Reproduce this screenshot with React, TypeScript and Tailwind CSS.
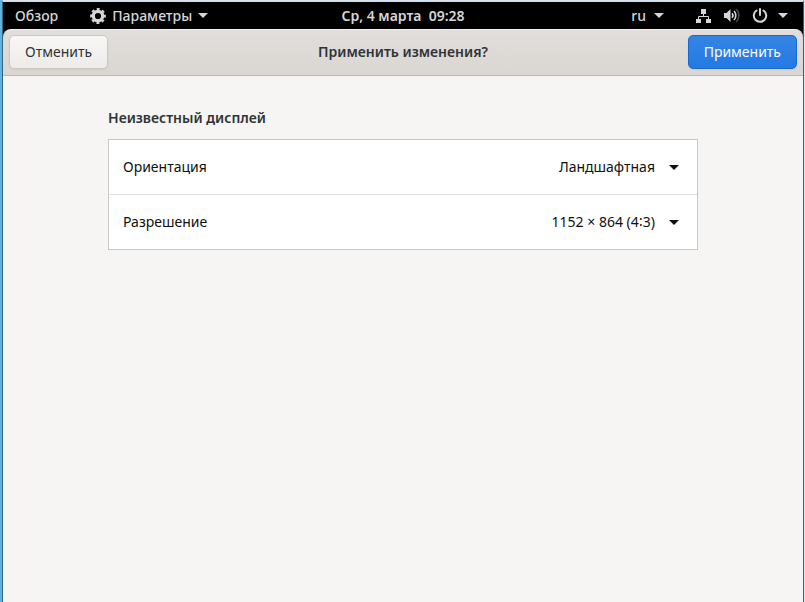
import { useState } from "react";

const ORIENTATIONS = ["Ландшафтная", "Портретная"];
const RESOLUTIONS = ["1152 × 864 (4∶3)", "1024 × 768 (4∶3)", "800 × 600 (4∶3)"];

type CaretProps = { className?: string };

function Caret({ className = "" }: CaretProps) {
    return (
        <svg viewBox="0 0 10 5" className={`h-[5px] w-[10px] shrink-0 fill-current ${className}`} aria-hidden="true">
            <path d="M0 0h10L5 5z" />
        </svg>
    );
}

function GearIcon() {
    return (
        <svg viewBox="0 0 16 16" className="size-4 shrink-0" fill="none" stroke="currentColor" aria-hidden="true">
            <circle cx="8" cy="8" r="4.700" strokeWidth="3.200" />
            <circle cx="8" cy="8" r="6.900" strokeWidth="2" strokeDasharray="3 2.419" strokeDashoffset="1.500" />
        </svg>
    );
}

function NetworkIcon() {
    return (
        <svg viewBox="0 0 16 16" className="size-4 shrink-0" aria-hidden="true">
            <path fill="currentColor" d="M5 1h5v5H5zM0 11h5v4H0zM10 11h5v4h-5z" />
            <path fill="none" stroke="currentColor" d="M7.500 6v2.500M2.500 11V8.500h10V11" />
        </svg>
    );
}

function VolumeIcon() {
    return (
        <svg viewBox="0 0 16 16" className="size-4 shrink-0" fill="none" stroke="currentColor" strokeWidth="1.6" aria-hidden="true">
            <path fill="currentColor" stroke="none" d="M0 5h2.500L6.500 1v13l-4-4H0z" />
            <path d="M8 5.300a3.200 3.200 0 0 1 0 4.400" />
            <path d="M10 3a6.500 6.500 0 0 1 0 9" />
            <path d="M12.300 1a9.500 9.500 0 0 1 0 13" opacity="0.35" />
        </svg>
    );
}

function PowerIcon() {
    return (
        <svg viewBox="0 0 16 16" className="size-4 shrink-0" fill="none" stroke="currentColor" strokeWidth="2" aria-hidden="true">
            <path d="M4.500 2.500a6.200 6.200 0 1 0 7 0" strokeLinecap="round" />
            <path d="M8 1v6" strokeLinecap="round" />
        </svg>
    );
}

function TopBar() {
    return (
        <nav className="grid h-[27px] grid-cols-[1fr_auto_1fr] items-center bg-black px-3 font-medium text-[#d6d6d6]">
            <div className="flex items-center gap-8">
                <button type="button">Обзор</button>
                <button type="button" className="flex items-center gap-1.5">
                    <GearIcon />
                    Параметры
                    <Caret />
                </button>
            </div>
            <button type="button" className="font-semibold whitespace-pre">Ср, 4 марта  09:28</button>
            <div className="flex items-center justify-end gap-8">
                <button type="button" className="flex items-center gap-2">
                    ru
                    <Caret />
                </button>
                <button type="button" className="flex items-center gap-2.5 pr-[3px]" aria-label="Система">
                    <span className="flex items-center gap-3">
                        <NetworkIcon />
                        <VolumeIcon />
                        <PowerIcon />
                    </span>
                    <Caret />
                </button>
            </div>
        </nav>
    );
}

type SettingRowProps = {
    id: string;
    label: string;
    value: string;
    options: string[];
    onChange: (value: string) => void;
};

function SettingRow({ id, label, value, options, onChange }: SettingRowProps) {
    return (
        <div className="relative flex items-center justify-between px-[14px] text-[#101010]">
            <label htmlFor={id}>{label}</label>
            <select
                id={id}
                value={value}
                onChange={(e) => onChange(e.target.value)}
                className="h-[54px] flex-1 cursor-pointer appearance-none bg-transparent pr-7 text-right [text-align-last:right] focus:outline-none"
            >
                {options.map((option) => (
                    <option key={option}>{option}</option>
                ))}
            </select>
            <Caret className="pointer-events-none absolute right-[18px]" />
        </div>
    );
}

export default function App() {
    const [orientation, setOrientation] = useState(ORIENTATIONS[0]);
    const [resolution, setResolution] = useState(RESOLUTIONS[0]);

    return (
        <div className="flex min-h-screen border-l-2 border-r border-l-[#5fb4de] border-r-[#d3ecf5] bg-[#f6f5f4] font-['Noto_Sans',sans-serif] text-sm">
            <div className="flex-1 border-x border-t-2 border-x-[#2f6486] border-t-[#d5e1ec]">
                <TopBar />

                <div className="bg-black">
                    <header className="grid h-[47px] grid-cols-[1fr_auto_1fr] items-center rounded-t-lg border-t border-b border-t-[#f4f2f0] border-b-[#bfb8b1] bg-linear-to-b from-[#e1dedb] to-[#dad6d2] px-1.5 pb-px text-[#2e3436]">
                        <button
                            type="button"
                            className="h-[34px] justify-self-start rounded-[5px] border border-[#cdc7c2] bg-linear-to-b from-[#f8f7f6] to-[#edebe9] px-[15px] shadow-xs"
                        >
                            Отменить
                        </button>
                        <h1 className="font-semibold">Применить изменения?</h1>
                        <button
                            type="button"
                            className="h-[34px] justify-self-end rounded-[5px] border border-[#1b6acb] bg-linear-to-b from-[#3584e4] to-[#237ae4] px-[15px] text-white shadow-xs"
                        >
                            Применить
                        </button>
                    </header>
                </div>

                <main className="mx-auto max-w-[590px] pt-8">
                    <h2 className="font-semibold text-[#2e3436]">Неизвестный дисплей</h2>
                    <div className="mt-[11px] divide-y divide-[#e1dfdd] border border-[#cbc8c4] bg-white">
                        <SettingRow
                            id="orientation"
                            label="Ориентация"
                            value={orientation}
                            options={ORIENTATIONS}
                            onChange={setOrientation}
                        />
                        <SettingRow
                            id="resolution"
                            label="Разрешение"
                            value={resolution}
                            options={RESOLUTIONS}
                            onChange={setResolution}
                        />
                    </div>
                </main>
            </div>
        </div>
    );
}
